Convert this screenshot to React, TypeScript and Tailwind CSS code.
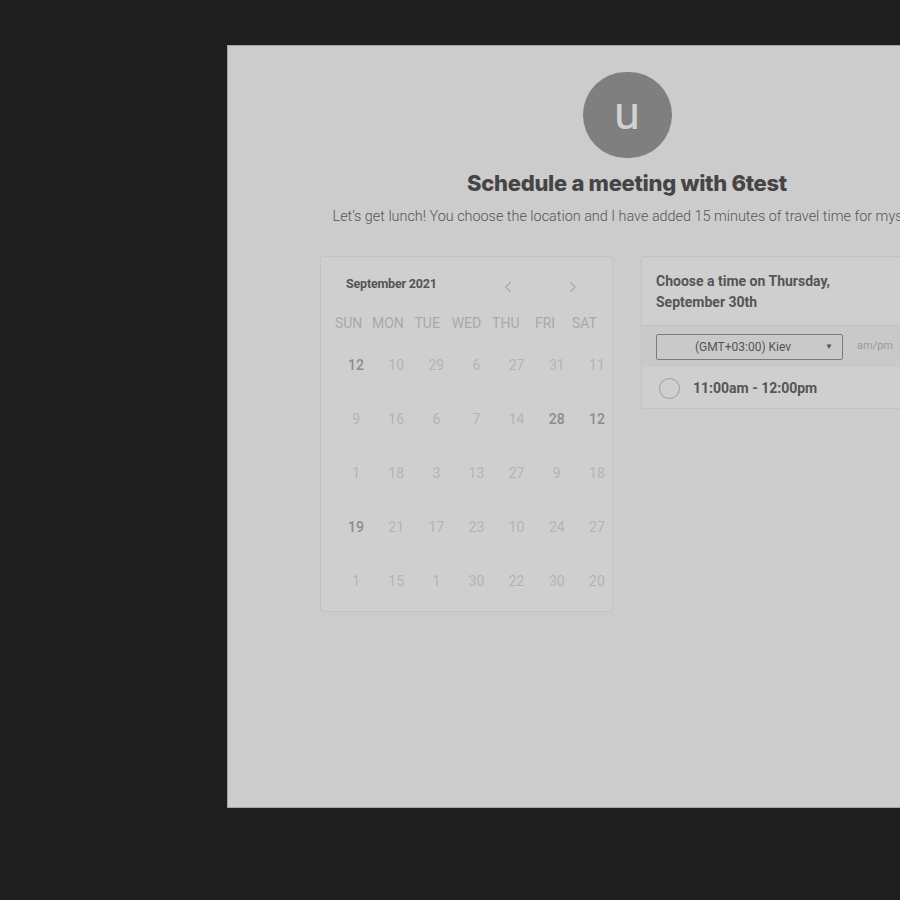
import { ChevronLeft, ChevronRight } from 'lucide-react'

const weekdays = ['SUN', 'MON', 'TUE', 'WED', 'THU', 'FRI', 'SAT']

// [day, highlighted]
const weeks: [number, boolean][][] = [
  [[12, true], [10, false], [29, false], [6, false], [27, false], [31, false], [11, false]],
  [[9, false], [16, false], [6, false], [7, false], [14, false], [28, true], [12, true]],
  [[1, false], [18, false], [3, false], [13, false], [27, false], [9, false], [18, false]],
  [[19, true], [21, false], [17, false], [23, false], [10, false], [24, false], [27, false]],
  [[1, false], [15, false], [1, false], [30, false], [22, false], [30, false], [20, false]],
]

export default function App() {
  return (
    <div
      className="w-[900px] h-[900px] overflow-hidden bg-[#1e1e1e] pt-[45px] pl-[227px]"
      style={{ fontFamily: 'Roboto, "Liberation Sans", sans-serif' }}
    >
      <div className="w-[800px] h-[763px] bg-[#cccccc] border border-[#a3a3a3] flex flex-col items-center pt-[26px]">

        {/* Avatar */}
        <div className="w-[89px] h-[86px] rounded-full bg-[#7f7f7f] flex items-center justify-center">
          <span className="text-[47px] leading-none text-[#d2d2d2] -mt-[6px]">u</span>
        </div>

        <h1 className="mt-[12px] text-[22px] leading-[26px] font-extrabold text-[#454545] tracking-[-0.3px] font-['Inter',sans-serif]">
          Schedule a meeting with 6test
        </h1>
        <p className="mt-[12px] text-[14.4px] leading-[18px] font-light text-[#555555] whitespace-nowrap">
          Let’s get lunch! You choose the location and I have added 15 minutes of travel time for myself.
        </p>

        <div className="mt-[30px] flex gap-[28px]">

          {/* Calendar */}
          <div className="w-[293px] h-[356px] bg-[#cfcfcf] border border-[#c2c2c2] rounded-[3px]">
            <div className="flex items-center h-[54px] pl-[25px]">
              <span className="text-[12.5px] font-bold text-[#555555] tracking-[-0.2px]">September 2021</span>
              <ChevronLeft size={18} strokeWidth={1.4} className="ml-[62px] mt-[6px] text-[#9a9a9a]" />
              <ChevronRight size={18} strokeWidth={1.4} className="ml-[47px] mt-[6px] text-[#9a9a9a]" />
            </div>
            <div className="grid grid-cols-7 px-[8px] h-[24px] items-center">
              {weekdays.map(d => (
                <span key={d} className="text-center text-[14px] text-[#a9a9a9]">{d}</span>
              ))}
            </div>
            <div className="flex flex-col pl-[15px] mt-[3px]">
              {weeks.map((w, i) => (
                <div key={i} className="grid grid-cols-7 w-[281px] h-[54px] items-center">
                  {w.map(([n, hl], j) => (
                    <span
                      key={j}
                      className={
                        hl
                          ? 'text-center text-[14px] font-medium text-[#8c8c8c]'
                          : 'text-center text-[14px] text-[#b4b4b4]'
                      }
                    >
                      {n}
                    </span>
                  ))}
                </div>
              ))}
            </div>
          </div>

          {/* Time picker */}
          <div className="w-[293px] h-[153px] self-start bg-[#cfcfcf] border border-[#c2c2c2] rounded-[3px] overflow-hidden">
            <div className="h-[69px] pt-[14px] pl-[14px] border-b border-[#c2c2c2]">
              <p className="text-[14px] leading-[21px] font-bold text-[#555555]">
                Choose a time on Thursday,<br />September 30th
              </p>
            </div>
            <div className="h-[41px] bg-[#c9c9c9] flex items-center pl-[14px]">
              <div className="w-[187px] h-[26px] border border-[#7a7a7a] rounded-[2px] flex items-center">
                <span className="flex-1 text-center text-[12px] text-[#555555] pl-[4px]">(GMT+03:00) Kiev</span>
                <span className="text-[8px] text-[#555555] mr-[9px]">▼</span>
              </div>
              <span className="ml-[14px] text-[11px] text-[#9a9a9a]">am/pm</span>
              <span className="ml-[6px] w-[28px] h-[14px] rounded-full bg-[#bdbdbd]" />
            </div>
            <div className="h-[42px] flex items-center pl-[17px]">
              <span className="w-[21px] h-[21px] rounded-full border-[1.5px] border-[#9c9c9c]" />
              <span className="ml-[13px] text-[14px] font-bold text-[#555555]">11:00am - 12:00pm</span>
            </div>
          </div>
        </div>
      </div>
    </div>
  )
}
